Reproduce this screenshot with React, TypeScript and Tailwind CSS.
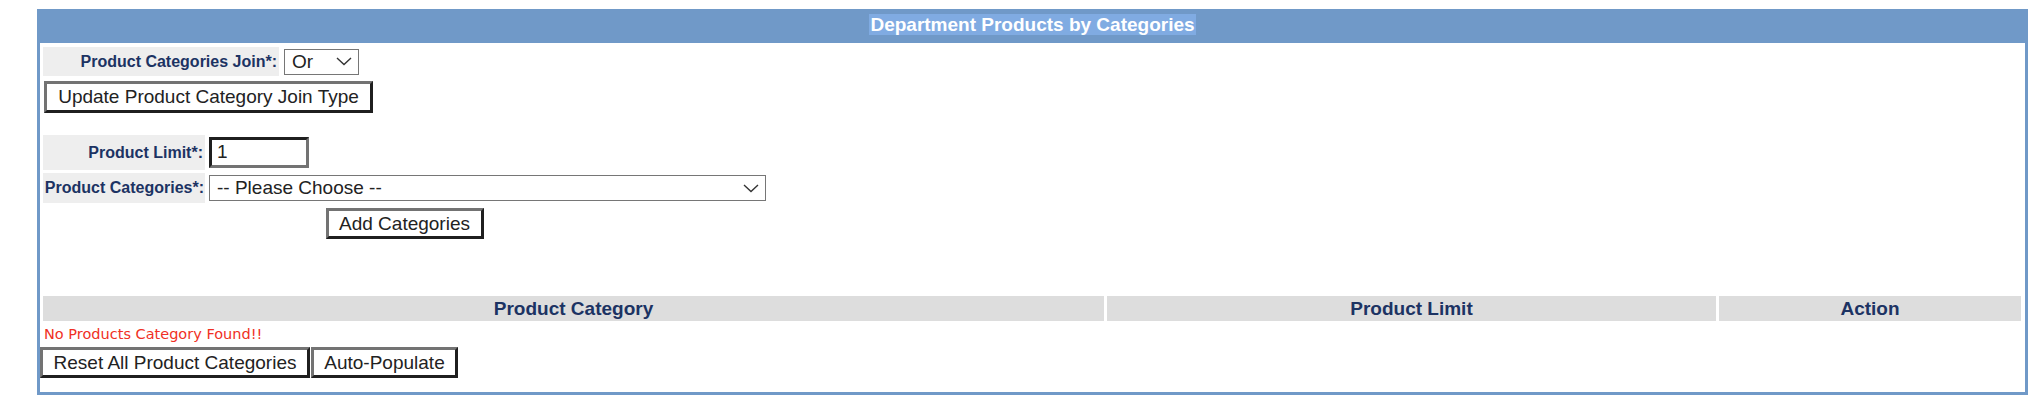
const labelFont = { fontFamily: '"Liberation Sans", Arial, sans-serif' };

function Chevron() {
  return (
    <svg width="16" height="9" viewBox="0 0 16 9" fill="none" className="shrink-0">
      <path d="M1 1l7 6.5L15 1" stroke="#333" strokeWidth="1.4" />
    </svg>
  );
}

function OutsetButton({ children, className = '' }: { children: React.ReactNode; className?: string }) {
  return (
    <button
      type="button"
      className={`h-[31px] px-[10px] bg-white text-[19px] leading-[22px] text-[#222] border-[3px] border-t-[#737373] border-l-[#737373] border-r-[#1f1f1f] border-b-[#1f1f1f] whitespace-nowrap ${className}`}
    >
      {children}
    </button>
  );
}

function FakeSelect({ value, className = '' }: { value: string; className?: string }) {
  return (
    <div
      className={`h-[26px] flex items-center justify-between bg-white border border-[#767676] pl-[7px] pr-[6px] text-[19px] text-[#222] ${className}`}
    >
      <span className="leading-[22px]">{value}</span>
      <Chevron />
    </div>
  );
}

function Label({ children, className = '' }: { children: React.ReactNode; className?: string }) {
  return (
    <div className={`bg-[#eeeeee] flex items-center justify-end text-[16px] font-bold text-[#1c3363] ${className}`}>
      {children}
    </div>
  );
}

export default function App() {
  return (
    <div className="w-[2036px] h-[404px] bg-white pt-[9px] pl-[37px]" style={labelFont}>
      <div className="w-[1991px] h-[386px] border-[3px] border-[#7099c8] flex flex-col">
        {/* Header */}
        <div className="h-[31px] bg-[#7099c8] flex justify-center items-start pt-[2px]">
          <span className="bg-[#80abe2] text-white font-bold text-[19px] leading-[21px] px-[1px]">
            Department Products by Categories
          </span>
        </div>

        {/* Join type */}
        <div className="flex items-center mt-[4px] ml-[3px] gap-[5px]">
          <Label className="w-[236px] h-[29px] pr-[2px]">Product Categories Join*:</Label>
          <FakeSelect value="Or" className="w-[75px]" />
        </div>
        <div className="flex mt-[5px] ml-[4px]">
          <OutsetButton className="h-[32px] w-[329px]">Update Product Category Join Type</OutsetButton>
        </div>

        {/* Limit + categories */}
        <div className="flex flex-col w-[723px] ml-[3px] mt-[22px]">
          <div className="flex items-center gap-[4px]">
            <Label className="w-[162px] h-[35px] pr-[2px]">Product Limit*:</Label>
            <div className="w-[100px] h-[31px] bg-white border-[3px] border-t-[#1f1f1f] border-l-[#1f1f1f] border-r-[#737373] border-b-[#737373] flex items-center pl-[5px] text-[19px] text-[#222]">
              1
            </div>
          </div>
          <div className="flex items-center gap-[4px] mt-[3px]">
            <Label className="w-[162px] h-[30px] pr-[1px]">Product Categories*:</Label>
            <FakeSelect value="-- Please Choose --" className="w-[557px]" />
          </div>
          <div className="flex justify-center mt-[5px]">
            <OutsetButton className="h-[30px] w-[158px]">Add Categories</OutsetButton>
          </div>
        </div>

        {/* Table */}
        <div className="grid grid-cols-[1061px_609px_302px] gap-x-[3px] ml-[3px] mt-[57px] h-[25px]">
          {['Product Category', 'Product Limit', 'Action'].map((h) => (
            <div
              key={h}
              className="bg-[#dddddd] flex items-center justify-center text-[19px] font-bold text-[#1c3363] leading-[22px]"
            >
              {h}
            </div>
          ))}
        </div>
        <div
          className="ml-[4px] mt-[4px] text-[14.5px] leading-[18px] text-[#f03024]"
          style={{ fontFamily: '"DejaVu Sans", Verdana, sans-serif' }}
        >
          No Products Category Found!!
        </div>
        <div className="flex gap-[1px] mt-[4px]">
          <OutsetButton className="w-[270px]">Reset All Product Categories</OutsetButton>
          <OutsetButton className="w-[147px]">Auto-Populate</OutsetButton>
        </div>
      </div>
    </div>
  );
}
